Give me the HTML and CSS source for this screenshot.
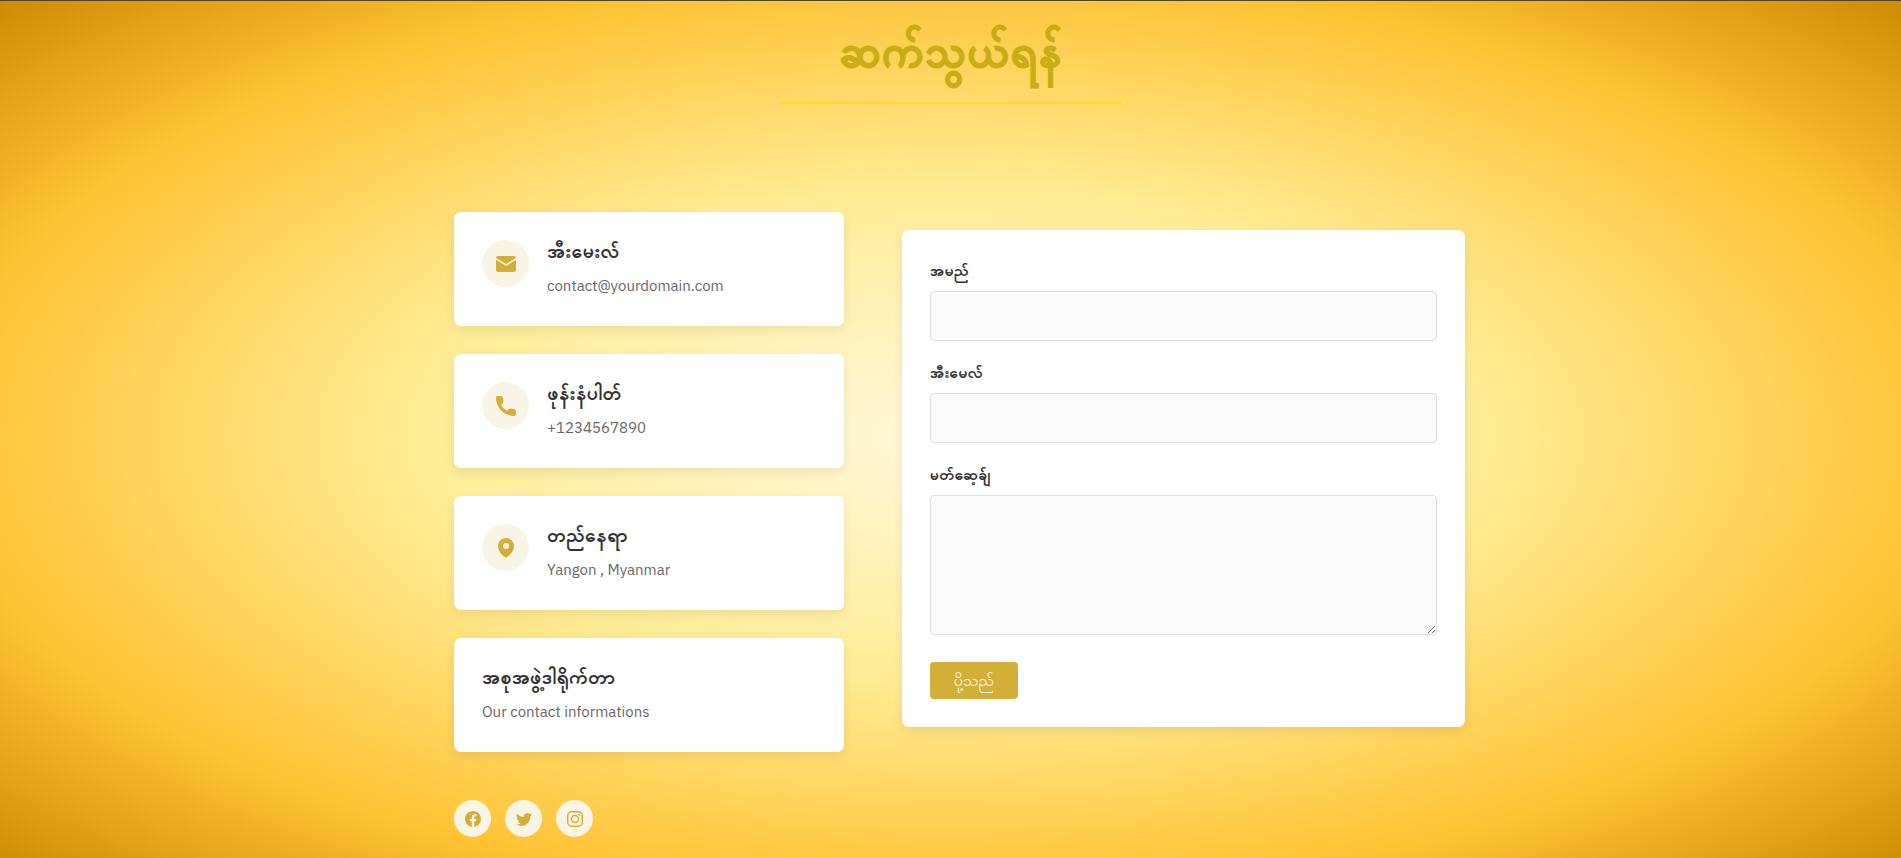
FILE: index.html
```
<!DOCTYPE html>
<html lang="my">
<head>
    <meta charset="UTF-8">
    <meta name="viewport" content="width=device-width, initial-scale=1.0">
    <title>ဆက်သွယ်ရန်</title>
    <link rel="stylesheet" href="styles.css">
</head>
<body>
    <header class="page-header">
        <h1 class="page-title">ဆက်သွယ်ရန်</h1>
    </header>

    <main class="contact">
        <section class="contact-info">
            <div class="card">
                <span class="card-icon">
                    <svg viewBox="0 0 20 20" aria-hidden="true">
                        <path d="M2 2h16a2 2 0 0 1 2 2L10 10 0 4a2 2 0 0 1 2-2z"/>
                        <path d="M0 5.800 10 12l10-6.200V16a2 2 0 0 1-2 2H2a2 2 0 0 1-2-2z"/>
                    </svg>
                </span>
                <div class="card-body">
                    <h2>အီးမေးလ်</h2>
                    <p>contact@yourdomain.com</p>
                </div>
            </div>

            <div class="card">
                <span class="card-icon">
                    <svg viewBox="0 0 20 20" aria-hidden="true">
                        <path d="M1.600 0H5a1.800 1.800 0 0 1 1.800 1.500L7.400 5.500a2.200 2.200 0 0 1-.7 2L5.200 8.900a13 13 0 0 0 5.900 5.900l1.400-1.500a2.200 2.200 0 0 1 2-.7l4 .600A1.800 1.800 0 0 1 20 15v3.200a1.800 1.800 0 0 1-1.800 1.800C8 20 0 12 0 1.800A1.700 1.700 0 0 1 1.600 0z"/>
                    </svg>
                </span>
                <div class="card-body">
                    <h2>ဖုန်းနံပါတ်</h2>
                    <p>+1234567890</p>
                </div>
            </div>

            <div class="card">
                <span class="card-icon">
                    <svg viewBox="0 0 20 20" aria-hidden="true">
                        <path fill-rule="evenodd" d="M10 0a8 8 0 0 0-8 8c0 5 4 9 6.800 11a2 2 0 0 0 2.400 0C14 17 18 13 18 8a8 8 0 0 0-8-8zm0 5a3 3 0 1 1 0 6 3 3 0 0 1 0-6z"/>
                    </svg>
                </span>
                <div class="card-body">
                    <h2>တည်နေရာ</h2>
                    <p>Yangon , Myanmar</p>
                </div>
            </div>

            <div class="card">
                <div class="card-body">
                    <h2>အစုအဖွဲ့ဒါရိုက်တာ</h2>
                    <p>Our contact informations</p>
                </div>
            </div>

            <nav class="social">
                <a href="#" aria-label="Facebook">
                    <svg viewBox="2 2 20 20"><path d="M12.001 2.002c-5.522 0-9.999 4.477-9.999 9.999 0 4.990 3.656 9.126 8.437 9.879v-6.988h-2.540v-2.891h2.540V9.798c0-2.508 1.493-3.891 3.776-3.891 1.094 0 2.240.195 2.240.195v2.459h-1.264c-1.240 0-1.628.772-1.628 1.563v1.875h2.771l-.443 2.891h-2.328v6.988C18.344 21.129 22 16.992 22 12.001c0-5.522-4.477-9.999-9.999-9.999z"/></svg>
                </a>
                <a href="#" aria-label="Twitter">
                    <svg viewBox="0 0 16 16"><path d="M5.026 15c6.038 0 9.341-5.003 9.341-9.334 0-.14 0-.282-.006-.422A6.685 6.685 0 0 0 16 3.542a6.658 6.658 0 0 1-1.889.518 3.301 3.301 0 0 0 1.447-1.817 6.533 6.533 0 0 1-2.087.793A3.286 3.286 0 0 0 7.875 6.030a9.325 9.325 0 0 1-6.767-3.429 3.289 3.289 0 0 0 1.018 4.382A3.323 3.323 0 0 1 .64 6.575v.045a3.288 3.288 0 0 0 2.632 3.218 3.203 3.203 0 0 1-.865.115 3.230 3.230 0 0 1-.614-.057 3.283 3.283 0 0 0 3.067 2.277A6.588 6.588 0 0 1 .78 13.580a6.320 6.320 0 0 1-.78-.045A9.344 9.344 0 0 0 5.026 15z"/></svg>
                </a>
                <a href="#" aria-label="Instagram">
                    <svg viewBox="0 0 16 16">
                        <rect class="line" x=".75" y=".75" width="14.500" height="14.500" rx="4"/>
                        <circle class="line" cx="8" cy="8" r="3.500"/>
                        <circle cx="12.200" cy="3.800" r="1"/>
                    </svg>
                </a>
            </nav>
        </section>

        <form class="contact-form">
            <div class="form-group">
                <label for="name">အမည်</label>
                <input type="text" id="name" name="name" required>
            </div>
            <div class="form-group">
                <label for="email">အီးမေလ်</label>
                <input type="email" id="email" name="email" required>
            </div>
            <div class="form-group">
                <label for="message">မတ်ဆေ့ခ်ျ</label>
                <textarea id="message" name="message" required></textarea>
            </div>
            <button type="submit" class="submit-btn">ပို့သည်</button>
        </form>
    </main>
</body>
</html>
```
FILE: styles.css
```
* {
    box-sizing: border-box;
    margin: 0;
    padding: 0;
}

body {
    min-height: 100vh;
    padding-bottom: 35px;
    border-top: 1px solid #4d4330;
    background: radial-gradient(ellipse at center, #fff8dc 0%, #ffec94 40%, #ffc233 75%, #cc8c00 100%) no-repeat;
    font-family: "IBM Plex Sans", "Padauk", "Noto Sans", sans-serif;
    color: #333;
}

.page-header {
    width: 18%;
    margin: 0 auto 108px;
    padding-top: 21px;
    border-bottom: 2px solid #ffd92e;
    text-align: center;
}

.page-title {
    height: 80px;
    font-size: 45px;
    font-weight: 700;
    line-height: 57px;
    color: #c8ae15;
    -webkit-text-stroke: 1px #c8ae15;
    white-space: nowrap;
}

.contact {
    display: grid;
    grid-template-columns: 9fr 13fr;
    align-items: start;
    gap: 58px;
    max-width: 1029px;
    margin: 0 auto;
    padding-left: 18px;
}

.contact-info {
    display: flex;
    flex-direction: column;
    gap: 28px;
}

.card,
.contact-form {
    background: #fff;
    padding: 28px;
    border-radius: 7px;
    box-shadow: 0 4px 12px rgba(0,0,0,0.08);
}

.card {
    display: flex;
    align-items: flex-start;
    gap: 18px;
}

.card-icon {
    display: flex;
    flex: none;
    align-items: center;
    justify-content: center;
    width: 47px;
    height: 47px;
    border-radius: 50%;
    background: #f9f5e6;
}

.card-icon svg {
    width: 20px;
    height: 20px;
    fill: #d4af37;
}

.card h2 {
    margin-bottom: 12px;
    font-size: 20px;
    font-weight: 700;
    line-height: 22px;
}

.card p {
    padding-bottom: 1px;
    font-size: 15px;
    line-height: 23px;
    color: #666;
}

.social {
    display: flex;
    gap: 14px;
    margin-top: 20px;
}

.social a {
    display: flex;
    align-items: center;
    justify-content: center;
    width: 37px;
    height: 37px;
    border-radius: 50%;
    background: #f9f5e6;
}

.social svg {
    width: 16px;
    height: 16px;
    fill: #d4af37;
}

.social .line {
    fill: none;
    stroke: #d4af37;
    stroke-width: 1.5;
}

.contact-form {
    margin-top: 18px;
}

.form-group {
    margin-bottom: 19px;
}

label {
    display: block;
    margin-bottom: 8px;
    font-size: 16px;
    font-weight: 700;
    line-height: 25px;
}

input,
textarea {
    display: block;
    width: 100%;
    height: 50px;
    padding: 12px;
    border: 1px solid #ddd;
    border-radius: 4px;
    background: #fafafa;
    font-family: inherit;
    font-size: 15px;
}

textarea {
    height: 140px;
    resize: vertical;
}

.submit-btn {
    height: 37px;
    margin-top: 8px;
    padding: 0 24px;
    border: none;
    border-radius: 4px;
    background: #d4af37;
    color: #fff;
    font-family: inherit;
    font-size: 16px;
    line-height: 37px;
    cursor: pointer;
}
```
